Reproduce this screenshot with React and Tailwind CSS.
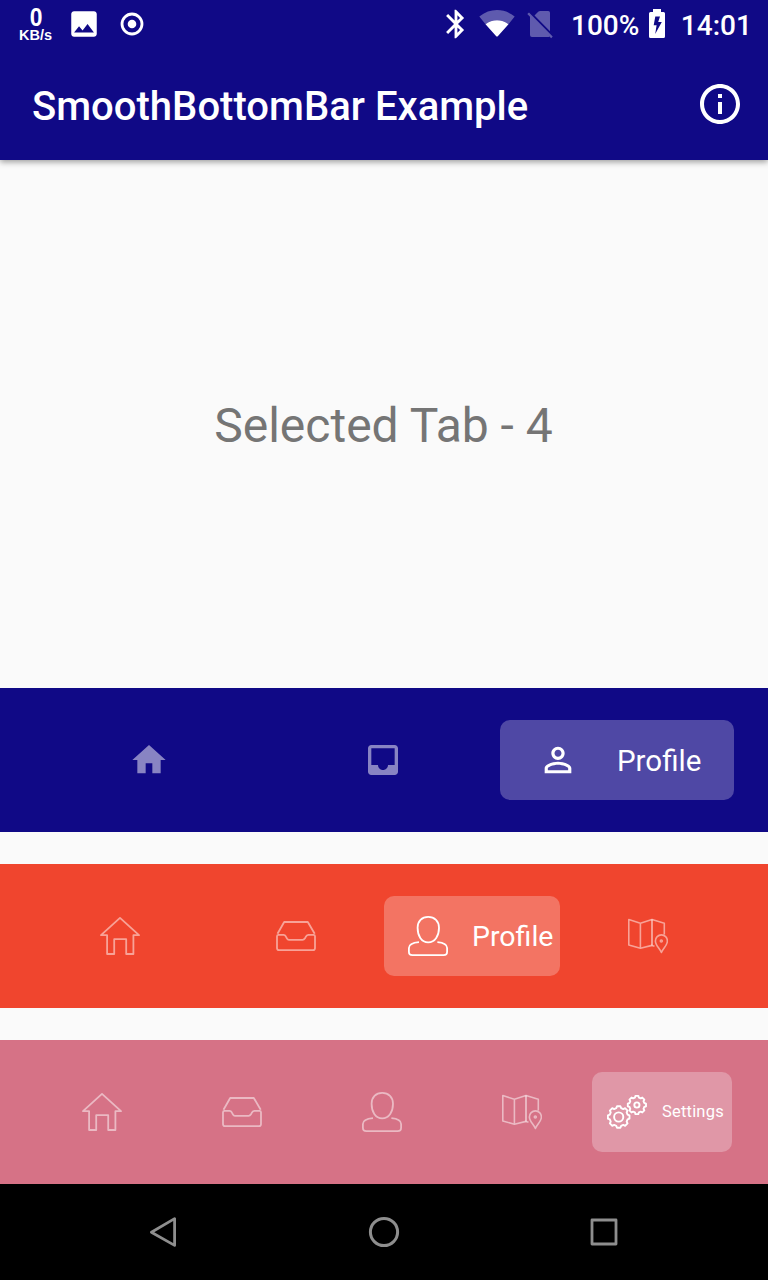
const MATERIAL = {
  info: "M11 7h2v2h-2zm0 4h2v6h-2zm1-9C6.48 2 2 6.48 2 12s4.48 10 10 10 10-4.48 10-10S17.52 2 12 2zm0 18c-4.41 0-8-3.59-8-8s3.59-8 8-8 8 3.59 8 8-3.59 8-8 8z",
  home: "M10 20v-6h4v6h5v-8h3L12 3 2 12h3v8z",
  inbox:
    "M19 3H4.99c-1.11 0-1.98.89-1.98 2L3 19c0 1.1.88 2 1.99 2H19c1.1 0 2-.9 2-2V5c0-1.11-.9-2-2-2zm0 12h-4c0 1.66-1.35 3-3 3s-3-1.34-3-3H4.99V5H19v10z",
  person:
    "M12 5.9c1.16 0 2.1.94 2.1 2.1s-.94 2.1-2.1 2.1S9.9 9.16 9.9 8s.94-2.1 2.1-2.1m0 9c2.97 0 6.1 1.46 6.1 2.1v1.1H5.9V17c0-.64 3.13-2.1 6.1-2.1M12 4C9.79 4 8 5.79 8 8s1.79 4 4 4 4-1.79 4-4-1.79-4-4-4zm0 9c-2.67 0-8 1.34-8 4v3h16v-3c0-2.66-5.33-4-8-4z",
  image:
    "M21 19V5c0-1.1-.9-2-2-2H5c-1.1 0-2 .9-2 2v14c0 1.1.9 2 2 2h14c1.1 0 2-.9 2-2zM8.5 13.5l2.5 3.01L14.5 12l4.5 6H5l3.5-4.5z",
  bluetooth:
    "M17.71 7.71L12 2h-1v7.59L6.41 5 5 6.41 10.59 12 5 17.59 6.41 19 11 14.41V22h1l5.71-5.71-4.3-4.29 4.3-4.29zM13 5.83l1.88 1.88L13 9.59V5.83zm1.88 10.46L13 18.17v-3.76l1.88 1.88z",
};

function Material({ name, className }) {
  return (
    <svg viewBox="0 0 24 24" fill="currentColor" className={`shrink-0 ${className}`}>
      <path d={MATERIAL[name]} />
    </svg>
  );
}

function Line({ children, width = 1.8 }) {
  return (
    <svg
      viewBox="0 0 40 40"
      fill="none"
      stroke="currentColor"
      strokeWidth={width}
      strokeLinejoin="round"
      className="size-10 shrink-0"
    >
      {children}
    </svg>
  );
}

const HomeLine = () => (
  <Line>
    <path d="M20 1.9 1 19.2H7.1V38H14.2V23.2H26.2V38H33.4V19.2H39Z" />
  </Line>
);

const InboxLine = () => (
  <Line>
    <path d="M1.5 17.8 8.2 6H31.8L38.7 17.8" />
    <path d="M1 20.2Q1 18.8 2.5 18.8H7.5Q9 18.8 9.8 20.4L11 22.6Q11.6 23.8 13 23.8H26.6Q28 23.8 28.8 22.6L30 20.4Q31 18.8 32.5 18.8H37.5Q39 18.8 39 20.2V32Q39 34.2 37 34.2H3Q1 34.2 1 32Z" />
  </Line>
);

const PersonLine = () => (
  <Line>
    <path d="M20.2.9C26.6.9 31 5.2 31 11.8C31 19.5 27.2 26.4 20.2 26.4S9.6 19.5 9.6 11.8C9.6 5.2 13.8.9 20.2.9Z" />
    <path d="M11 26.1C5 26.6.9 28 .9 32V35.7Q.9 39.1 4.4 39.1H35.6Q39.1 39.1 39.1 35.7V32C39.1 28 35 26.6 29.4 26.1" />
  </Line>
);

const MapLine = () => (
  <Line width={1.6}>
    <path d="M26.5 30.2 24 29.4 12.4 32.2.8 29V3.6L12.4 7.2 24 3.6 36.3 7.2V18.5M12.4 7.2V32.2" />
    <path d="M24 3.6V29.4" strokeWidth="1.9" />
    <path d="M33.4 36.4C31.6 32 27.4 29.2 27.4 24.9A6 6 0 0 1 39.4 24.9C39.4 29.2 35.2 32 33.4 36.4Z" />
    <circle cx="33.3" cy="25" r="1" />
  </Line>
);

function gear(cx, cy, outer, inner) {
  const teeth = 8;
  const step = (Math.PI * 2) / teeth;
  const at = (r, a) => `${(cx + r * Math.cos(a)).toFixed(2)} ${(cy + r * Math.sin(a)).toFixed(2)}`;
  let d = "";
  for (let i = 0; i < teeth; i += 1) {
    const a = i * step;
    d += `${i ? "L" : "M"}${at(inner, a - step * 0.34)}L${at(outer, a - step * 0.2)}L${at(outer, a + step * 0.2)}L${at(inner, a + step * 0.34)}`;
  }
  return `${d}Z`;
}

const GearsLine = () => (
  <Line width={1.9}>
    <path d={gear(11.7, 25, 10.9, 9.2)} />
    <circle cx="11.7" cy="25" r="4.6" />
    <path d={gear(29.9, 13, 9.2, 7.6)} />
    <circle cx="29.9" cy="13" r="2.6" />
  </Line>
);

function StatusBar() {
  return (
    <div className="flex h-12 items-center pl-[18px] font-medium">
      <div className="flex h-12 w-[34px] flex-col items-center pt-[5px] font-['Liberation_Sans',sans-serif] font-bold">
        <span className="ml-[2px] scale-x-[.88] text-[26px] leading-[24px]">0</span>
        <span className="ml-px text-[14.5px] leading-[13px]">KB/s</span>
      </div>
      <Material name="image" className="ml-[15px] size-[34px]" />
      <svg viewBox="0 0 24 24" fill="none" stroke="currentColor" className="ml-[19px] size-6">
        <circle cx="12" cy="12" r="10" strokeWidth="2.8" />
        <circle cx="12" cy="12" r="4.3" fill="currentColor" stroke="none" />
      </svg>
      <Material name="bluetooth" className="ml-[295px] size-[34px]" />
      <svg viewBox="0 0 36 28" fill="currentColor" className="ml-[6px] h-7 w-9">
        <path
          d="M.3 6.5C11-2.1 25-2.1 35.7 6.5L29.5 14.2C23 8.9 13 8.9 6.5 14.2Z"
          opacity=".33"
        />
        <path d="M6.5 14.2C13 8.9 23 8.9 29.5 14.2L19 26Q18 27.2 17 26Z" />
      </svg>
      <svg viewBox="0 0 26 30" fill="currentColor" opacity=".33" className="ml-3 mt-[2px] h-[30px] w-[26px]">
        <path d="M7.5 5.5 11.2 1.8Q12 1 13.2 1H21.3Q23 1 23 2.8V21.3ZM.3 4 2 2.4 25.7 26.6 24.2 28.2 22.4 26.4Q21.8 27 21 27H5Q3 27 3 25V6.8Z" />
      </svg>
      <span className="ml-[18px] mt-[3px] text-[28px]">100%</span>
      <svg viewBox="0 0 16 29" fill="currentColor" className="ml-[10px] mb-px h-[29px] w-4">
        <path
          fillRule="evenodd"
          d="M4 3V0H12V3H14.5Q16 3 16 4.5V27.5Q16 29 14.5 29H1.5Q0 29 0 27.5V4.5Q0 3 1.5 3ZM11 7.5H6.3L4.7 16.2H7.6L6.2 25 12.8 13H9.2Z"
        />
      </svg>
      <span className="ml-[15.5px] mt-[3px] text-[28px]">14:01</span>
    </div>
  );
}

function Idle({ width, children }) {
  return <div className={`flex items-center justify-center text-white/50 ${width}`}>{children}</div>;
}

function BottomBar({ color, children }) {
  return <nav className={`flex h-36 shrink-0 py-8 pl-8 ${color}`}>{children}</nav>;
}

export default function App() {
  return (
    <div className="flex h-[1280px] w-[768px] flex-col overflow-hidden bg-[#fafafa] font-[Roboto,sans-serif] text-white">
      <header className="relative shrink-0 bg-[#100986] shadow-[0_2px_6px_rgba(0,0,0,0.38)]">
        <StatusBar />
        <div className="flex h-28 items-center justify-between pl-8 pr-6">
          <h1 className="mt-[5px] text-[40px] font-medium leading-none tracking-[0.02px]">SmoothBottomBar Example</h1>
          <Material name="info" className="size-12" />
        </div>
      </header>

      <main className="flex flex-1 items-center justify-center pr-px pt-[3px] text-[48px] text-[#757575]">
        Selected Tab - 4
      </main>

      <div className="flex shrink-0 flex-col gap-8">
        <BottomBar color="bg-[#100986]">
          <Idle width="w-[234px]">
            <Material name="home" className="size-10" />
          </Idle>
          <Idle width="w-[234px]">
            <Material name="inbox" className="size-10" />
          </Idle>
          <div className="flex w-[234px] items-center rounded-[10px] bg-[#4f48a5] pl-[38px]">
            <Material name="person" className="size-10" />
            <span className="ml-[39px] mt-[3px] text-[29.5px]">Profile</span>
          </div>
        </BottomBar>

        <BottomBar color="bg-[#f0452e]">
          <Idle width="w-[176px]">
            <HomeLine />
          </Idle>
          <Idle width="w-[176px]">
            <InboxLine />
          </Idle>
          <div className="flex w-[176px] items-center rounded-[10px] bg-[#f37463] pl-6">
            <PersonLine />
            <span className="ml-6 mt-[3px] text-[28.5px]">Profile</span>
          </div>
          <Idle width="w-[176px]">
            <MapLine />
          </Idle>
        </BottomBar>

        <BottomBar color="bg-[#d67286]">
          <Idle width="w-[140px]">
            <HomeLine />
          </Idle>
          <Idle width="w-[140px]">
            <InboxLine />
          </Idle>
          <Idle width="w-[140px]">
            <PersonLine />
          </Idle>
          <Idle width="w-[140px]">
            <MapLine />
          </Idle>
          <div className="flex w-[140px] items-center rounded-[10px] bg-[#e097a7] pl-[15px]">
            <GearsLine />
            <span className="ml-[15px] text-[16.5px] tracking-[0.2px]">Settings</span>
          </div>
        </BottomBar>
      </div>

      <footer className="flex h-24 shrink-0 items-center bg-black pl-[148px] text-[#8e8e8e]">
        <svg viewBox="0 0 32 32" fill="none" stroke="currentColor" strokeWidth="2.8" strokeLinejoin="round" className="size-8">
          <path d="M26.6 2.6V29.4L3.4 16.2Z" />
        </svg>
        <svg viewBox="0 0 32 32" fill="none" stroke="currentColor" strokeWidth="3" className="ml-[188px] size-8">
          <circle cx="16" cy="16" r="13.6" />
        </svg>
        <svg viewBox="0 0 32 32" fill="none" stroke="currentColor" strokeWidth="2.8" strokeLinejoin="round" className="ml-[188px] size-8">
          <path d="M4 4H28V28H4Z" />
        </svg>
      </footer>
    </div>
  );
}
